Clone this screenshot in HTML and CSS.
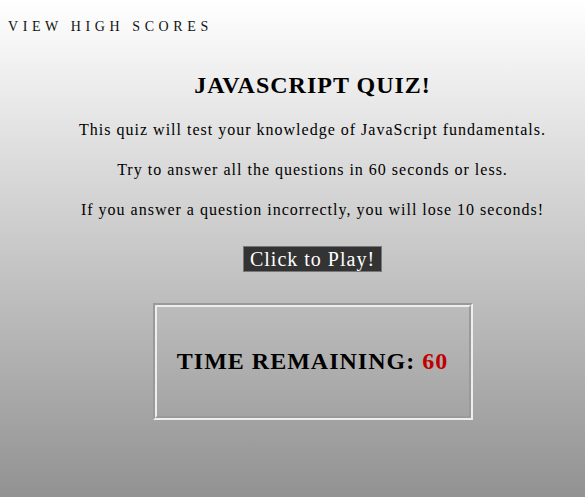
FILE: index.html
```html
<!DOCTYPE html>
<html lang="en">
<head>
<meta charset="utf-8">
<title>JavaScript Quiz</title>
<link rel="stylesheet" href="styles.css">
</head>
<body>
<header class="top-bar">
  <a class="scores-link" href="#">View High Scores</a>
</header>
<main class="quiz">
  <h1 class="quiz-title">JAVASCRIPT QUIZ!</h1>
  <p class="quiz-text">This quiz will test your knowledge of JavaScript fundamentals.</p>
  <p class="quiz-text">Try to answer all the questions in 60 seconds or less.</p>
  <p class="quiz-text">If you answer a question incorrectly, you will lose 10 seconds!</p>
  <button class="play-btn" type="button">Click to Play!</button>
  <section class="timer">
    <h2 class="timer-text">TIME REMAINING: <span class="timer-count">60</span></h2>
  </section>
</main>
</body>
</html>
```

FILE: styles.css
```css
html {
  height: 100%;
}
body {
  margin: 0;
  min-height: 497px;
  background: linear-gradient(to bottom, #ffffff 0%, #929292 100%);
  font-family: "Liberation Serif", "Times New Roman", serif;
  color: #000;
}
.top-bar {
  padding: 17px 8px 0 8px;
}
.scores-link {
  font-size: 14px;
  letter-spacing: 4.6px;
  text-transform: uppercase;
  color: #111;
  text-decoration: none;
}
.quiz {
  margin: 0 8px 0 48px;
  display: flex;
  flex-direction: column;
  align-items: center;
}
.quiz-title {
  margin: 37px 0 22px 0;
  font-size: 24px;
  letter-spacing: 1px;
}
.quiz-text {
  margin: 0 0 22px 0;
  font-size: 16px;
  letter-spacing: 1px;
}
.play-btn {
  margin-top: 5px;
  font-family: "Liberation Serif", "Times New Roman", serif;
  font-size: 20px;
  letter-spacing: 1px;
  color: #fff;
  background: #333;
  border: 1px solid #777;
  padding: 0 6px;
  height: 26px;
  line-height: 22px;
}
.timer {
  margin-top: 31px;
  width: 312px;
  height: 109px;
  border: 4px groove #eee;
  display: flex;
  align-items: center;
  justify-content: center;
}
.timer-text {
  margin: 0;
  font-size: 24px;
  letter-spacing: 1px;
}
.timer-count {
  color: #c00000;
}
```
